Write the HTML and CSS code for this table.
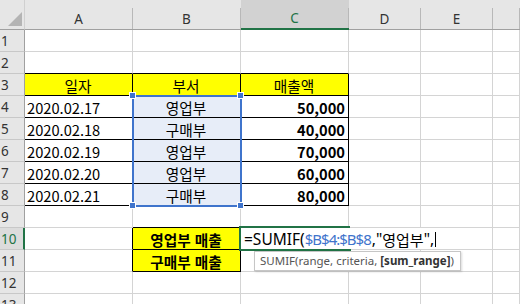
FILE: index.html
```html
<!DOCTYPE html>
<html lang="ko">

<head>
  <meta charset="UTF-8">
  <meta name="viewport" content="width=device-width, initial-scale=1.0">
  <title>SUMIF 예제</title>
  <link rel="stylesheet" href="styles.css">
</head>

<body>
  <div class="sheet">
    <div class="grid">
      <!-- 열 머리글 -->
      <div class="corner">
        <svg width="24" height="29" viewBox="0 0 24 29"><polygon points="22,12 22,26 8,26" fill="#b4b4b4"/></svg>
      </div>
      <div class="ch"><span>A</span></div>
      <div class="ch"><span>B</span></div>
      <div class="ch active"><span>C</span></div>
      <div class="ch"><span>D</span></div>
      <div class="ch"><span>E</span></div>
      <div class="ch"><span></span></div>

      <!-- 1 -->
      <div class="rh">1</div>
      <div class="cell"></div><div class="cell"></div><div class="cell"></div>
      <div class="cell"></div><div class="cell"></div><div class="cell"></div>

      <!-- 2 -->
      <div class="rh">2</div>
      <div class="cell bk-b"></div><div class="cell bk-b"></div><div class="cell bk-b"></div>
      <div class="cell"></div><div class="cell"></div><div class="cell"></div>

      <!-- 3 : 표 머리글 -->
      <div class="rh">3</div>
      <div class="cell bk ylw ctr">일자</div>
      <div class="cell bk ylw ctr">부서</div>
      <div class="cell bk ylw ctr">매출액</div>
      <div class="cell"></div><div class="cell"></div><div class="cell"></div>

      <!-- 4 -->
      <div class="rh">4</div>
      <div class="cell bk">2020.02.17</div>
      <div class="cell bk sel ctr">영업부</div>
      <div class="cell bk num">50,000</div>
      <div class="cell"></div><div class="cell"></div><div class="cell"></div>

      <!-- 5 -->
      <div class="rh">5</div>
      <div class="cell bk">2020.02.18</div>
      <div class="cell bk sel ctr">구매부</div>
      <div class="cell bk num">40,000</div>
      <div class="cell"></div><div class="cell"></div><div class="cell"></div>

      <!-- 6 -->
      <div class="rh">6</div>
      <div class="cell bk">2020.02.19</div>
      <div class="cell bk sel ctr">영업부</div>
      <div class="cell bk num">70,000</div>
      <div class="cell"></div><div class="cell"></div><div class="cell"></div>

      <!-- 7 -->
      <div class="rh">7</div>
      <div class="cell bk">2020.02.20</div>
      <div class="cell bk sel ctr">영업부</div>
      <div class="cell bk num">60,000</div>
      <div class="cell"></div><div class="cell"></div><div class="cell"></div>

      <!-- 8 -->
      <div class="rh">8</div>
      <div class="cell bk">2020.02.21</div>
      <div class="cell bk sel ctr">구매부</div>
      <div class="cell bk num">80,000</div>
      <div class="cell"></div><div class="cell"></div><div class="cell"></div>

      <!-- 9 -->
      <div class="rh">9</div>
      <div class="cell"></div><div class="cell bk-b"></div><div class="cell"></div>
      <div class="cell"></div><div class="cell"></div><div class="cell"></div>

      <!-- 10 -->
      <div class="rh active">10</div>
      <div class="cell bk-r"></div>
      <div class="cell bk ylw ctr bold">영업부 매출</div>
      <div class="cell"></div>
      <div class="cell"></div><div class="cell"></div><div class="cell"></div>

      <!-- 11 -->
      <div class="rh">11</div>
      <div class="cell bk-r"></div>
      <div class="cell bk ylw ctr bold">구매부 매출</div>
      <div class="cell"></div>
      <div class="cell"></div><div class="cell"></div><div class="cell"></div>

      <!-- 12 -->
      <div class="rh">12</div>
      <div class="cell"></div><div class="cell"></div><div class="cell"></div>
      <div class="cell"></div><div class="cell"></div><div class="cell"></div>

      <!-- 13 -->
      <div class="rh">13</div>
      <div class="cell"></div><div class="cell"></div><div class="cell"></div>
      <div class="cell"></div><div class="cell"></div><div class="cell"></div>
    </div>

    <!-- 참조 범위 B4:B8 -->
    <div class="range-sel">
      <i class="hd tl"></i><i class="hd tr"></i><i class="hd bl"></i><i class="hd br"></i>
    </div>

    <!-- 편집 중인 셀 C10 -->
    <div class="active-cell"></div>
    <div class="fill-handle"></div>
    <div class="editor">=SUMIF(<span class="ref">$B$4:$B$8</span>,"<span class="ko">영업부</span>",<i class="caret"></i></div>

    <!-- 함수 도움말 -->
    <div class="tip">SUMIF(range, criteria, <b>[sum_range]</b>)</div>
  </div>
</body>

</html>
```

FILE: styles.css
```css
* {
  margin: 0;
  padding: 0;
  box-sizing: border-box;
}

body {
  background: #fff;
  overflow: hidden;
  font-family: "Noto Sans CJK KR", "Noto Sans", sans-serif;
  color: #000;
}

.sheet {
  position: relative;
  width: 520px;
  height: 304px;
  overflow: hidden;
}

.grid {
  display: grid;
  grid-template-columns: 25px 108px 108px 108px 72px 72px 1fr;
  grid-template-rows: 30px;
  grid-auto-rows: 22px;
}

/* 머리글 */
.corner {
  background: #e6e6e6;
  border-bottom: 1px solid #a0a0a0;
  border-right: 1px solid #d0d0d0;
}

.corner svg {
  display: block;
}

.ch {
  background: #e6e6e6;
  border-bottom: 1px solid #a0a0a0;
  padding-top: 8px;
  font-family: "Noto Sans", sans-serif;
  font-size: 13.5px;
  color: #333;
}

.ch span {
  display: flex;
  align-items: center;
  justify-content: center;
  height: 21px;
  border-right: 1px solid #b8b8b8;
}

.ch.active {
  background: #d2d2d2;
  border-bottom: 2px solid #217346;
  color: #217346;
}

.ch.active span {
  height: 20px;
}

.rh {
  background: #e6e6e6;
  border-right: 1px solid #a0a0a0;
  border-bottom: 1px solid #c8c8c8;
  padding-left: 1px;
  display: flex;
  align-items: center;
  font-family: "Noto Sans", sans-serif;
  font-size: 13.5px;
  color: #333;
}

.rh.active {
  background: #dcdcdc;
  border-right: 2px solid #217346;
  color: #217346;
}

/* 셀 */
.cell {
  border-right: 1px solid #d4d4d4;
  border-bottom: 1px solid #d4d4d4;
  display: flex;
  align-items: center;
  padding: 1px 3px 0 2px;
  font-size: 14.67px;
  white-space: nowrap;
}

.bk {
  border-right-color: #000;
  border-bottom-color: #000;
}

.bk-b {
  border-bottom-color: #000;
}

.bk-r {
  border-right-color: #000;
}

.ylw {
  background: #ffff00;
}

.sel {
  background: #e7edf8;
}

.ctr {
  justify-content: center;
}

.num {
  justify-content: flex-end;
  font-weight: bold;
}

.bold {
  font-weight: bold;
}

/* 참조 범위 표시 */
.range-sel {
  position: absolute;
  left: 132px;
  top: 95px;
  width: 110px;
  height: 112px;
  border: 2px solid #3f74cc;
}

.hd {
  position: absolute;
  width: 7px;
  height: 7px;
  background: #3f74cc;
  border: 1px solid #fff;
}

.hd.tl { left: -5px; top: -5px; }
.hd.tr { right: -4px; top: -5px; }
.hd.bl { left: -5px; bottom: -4px; }
.hd.br { right: -4px; bottom: -4px; }

/* 활성 셀 */
.active-cell {
  position: absolute;
  left: 239px;
  top: 226px;
  width: 111px;
  height: 25px;
  border: 2px solid #217346;
}

.fill-handle {
  position: absolute;
  left: 345px;
  top: 248px;
  width: 6px;
  height: 5px;
  background: #217346;
}

.editor {
  position: absolute;
  left: 241px;
  top: 228px;
  height: 21px;
  padding: 1px 4px 0 3px;
  background: #fff;
  display: flex;
  align-items: center;
  font-family: "Noto Sans", "Noto Sans CJK KR", sans-serif;
  font-size: 15.5px;
  white-space: nowrap;
}

.ref {
  color: #3f74cc;
  font-size: 15px;
  letter-spacing: -1px;
  margin-right: 1px;
}

.ko {
  font-family: "Noto Sans CJK KR", sans-serif;
  font-size: 15px;
}

.caret {
  display: inline-block;
  width: 1px;
  height: 15px;
  margin-left: 1px;
  background: #000;
}

/* 도움말 */
.tip {
  position: absolute;
  left: 254px;
  top: 251px;
  width: 207px;
  height: 20px;
  padding-left: 5px;
  background: #fff;
  border: 1px solid #c6c6c6;
  box-shadow: 1px 1px 2px rgba(0, 0, 0, 0.15);
  font-family: "Noto Sans", sans-serif;
  font-size: 11.5px;
  line-height: 18px;
  color: #555;
  white-space: nowrap;
}

.tip b {
  color: #333;
}
```
